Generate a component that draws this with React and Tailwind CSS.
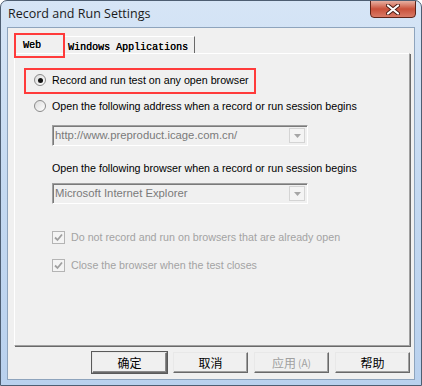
import React from 'react'

const Radio = ({ checked }) => (
    <span className="w-[12px] h-[12px] rounded-full border border-[#8a8a8a] bg-gradient-to-br from-[#dcdcdc] to-white flex items-center justify-center shrink-0">
        {checked && <span className="w-[5px] h-[5px] rounded-full bg-[#141414]" />}
    </span>
)

const Check = () => (
    <span className="w-[13px] h-[13px] border border-[#b4b4b4] bg-[#f4f4f4] flex items-center justify-center shrink-0">
        <svg width="9" height="9" viewBox="0 0 9 9">
            <path d="M1 4.5 L3.5 7 L8 1.5" fill="none" stroke="#a0a0a0" strokeWidth="1.8" />
        </svg>
    </span>
)

const Combo = ({ value }) => (
    <div className="ml-[18px] w-[256px] h-[21px] flex items-center border border-[#a0a0a0] border-b-white border-r-white shadow-[inset_1px_1px_0_#7a7a7a] bg-[#f0f0f0]">
        <span className="flex-1 pl-[2px] text-[11.3px] text-[#7a7a7a] truncate">{value}</span>
        <span className="w-[16px] h-[15px] mr-[2px] border border-[#d4d4d4] bg-[#f4f4f4] flex items-center justify-center">
            <svg width="7" height="4" viewBox="0 0 7 4"><path d="M0 0 H7 L3.5 4 Z" fill="#a6a6a6" /></svg>
        </span>
    </div>
)

const Btn = ({ children, def, disabled }) => (
    <button
        type="button"
        className={
            'w-[75px] h-[21px] flex items-center justify-center bg-[#f0f0f0] border border-t-[#e8e8e8] border-l-[#e8e8e8] border-r-[#696969] border-b-[#696969] text-[12px] ' +
            (def ? 'outline outline-1 outline-[#5a5a5a] shadow-[inset_-1px_-1px_0_#8a8a8a] ' : 'shadow-[inset_-1px_-1px_0_#a0a0a0] ') +
            (disabled ? 'text-[#a0a0a0]' : 'text-black')
        }
    >
        {children}
    </button>
)

export default function App() {
    return (
        <div className="w-[422px] h-[386px] flex flex-col overflow-hidden rounded-t-[7px] border border-[#4e5e72] bg-gradient-to-b from-[#d6e5f6] via-[#c4d9f1] to-[#b9d1ee] font-['Liberation_Sans','Noto_Sans_CJK_SC',sans-serif] text-[10.7px]">
            <div className="h-[26px] flex justify-between items-start pl-[7px] pr-[5px]">
                <span className="mt-[4px] text-[12.5px] text-[#1b1b1b] font-['Open_Sans',sans-serif]">Record and Run Settings</span>
                <div className="-mt-px w-[46px] h-[18px] rounded-b-[4px] border border-[#5e2418] bg-gradient-to-b from-[#e6b0a2] via-[#c9503a] to-[#d97a66] flex items-center justify-center">
                    <svg width="14" height="11" viewBox="0 0 14 11">
                        <path d="M2 1.5 L12 9.5 M12 1.5 L2 9.5" stroke="#4a1c14" strokeWidth="4" strokeLinecap="round" />
                        <path d="M2 1.5 L12 9.5 M12 1.5 L2 9.5" stroke="#ffffff" strokeWidth="2.2" strokeLinecap="round" />
                    </svg>
                </div>
            </div>

            <div className="mx-[6px] mb-[5px] flex-1 flex flex-col border border-[#8ea4bd] bg-[#f0f0f0]">
                <div className="h-[25px] pl-[6px] flex items-end">
                    <div className="relative w-[51px] h-[20px] pl-[8px] pt-[4px] bg-[#f0f0f0] border-t border-l border-white border-r border-r-[#a0a0a0] font-['Liberation_Mono',monospace] text-[10px] text-black [text-shadow:0.3px_0_0_#000]">
                        Web
                        <div className="absolute -top-px -left-px w-[51px] h-[25px] border-2 border-[#ff3b3b] z-10" />
                    </div>
                    <div className="w-[130px] h-[17px] pl-[3px] pt-[3px] border-t border-white border-r border-r-[#696969] font-['Liberation_Mono',monospace] text-[10px] text-black [text-shadow:0.3px_0_0_#000]">
                        Windows Applications
                    </div>
                </div>

                <div className="ml-[6px] mr-[4px] flex-1 flex flex-col pl-[19px] pt-[16px] border border-white border-r-[#a0a0a0] border-b-[#a0a0a0] shadow-[1px_1px_0_#696969]">
                    <div className="relative h-[20px] flex items-center gap-[6px] text-black">
                        <div className="absolute -left-[10px] -top-[2px] w-[232px] h-[26px] border-2 border-[#ff3b3b]" />
                        <Radio checked />
                        <span>Record and run test on any open browser</span>
                    </div>
                    <div className="mt-[6px] h-[20px] flex items-center gap-[6px] text-black">
                        <Radio />
                        <span>Open the following address when a record or run session begins</span>
                    </div>
                    <div className="mt-[9px]">
                        <Combo value="http://www.preproduct.icage.com.cn/" />
                    </div>
                    <div className="mt-[15px] ml-[18px] h-[14px] flex items-center text-black">
                        Open the following browser when a record or run session begins
                    </div>
                    <div className="mt-[8px]">
                        <Combo value="Microsoft Internet Explorer" />
                    </div>
                    <div className="mt-[25px] ml-[18px] h-[16px] flex items-center gap-[6px] text-[#a3a3a3]">
                        <Check />
                        <span>Do not record and run on browsers that are already open</span>
                    </div>
                    <div className="mt-[12px] ml-[18px] h-[16px] flex items-center gap-[6px] text-[#a3a3a3]">
                        <Check />
                        <span>Close the browser when the test closes</span>
                    </div>
                </div>

                <div className="mt-[6px] mb-[6px] h-[21px] pr-[4px] flex justify-end gap-[6px] font-['Noto_Sans_CJK_SC',sans-serif]">
                    <Btn def>确定</Btn>
                    <Btn>取消</Btn>
                    <Btn disabled>应用<span className="text-[10px] ml-[2px]">(A)</span></Btn>
                    <Btn>帮助</Btn>
                </div>
            </div>
        </div>
    )
}
